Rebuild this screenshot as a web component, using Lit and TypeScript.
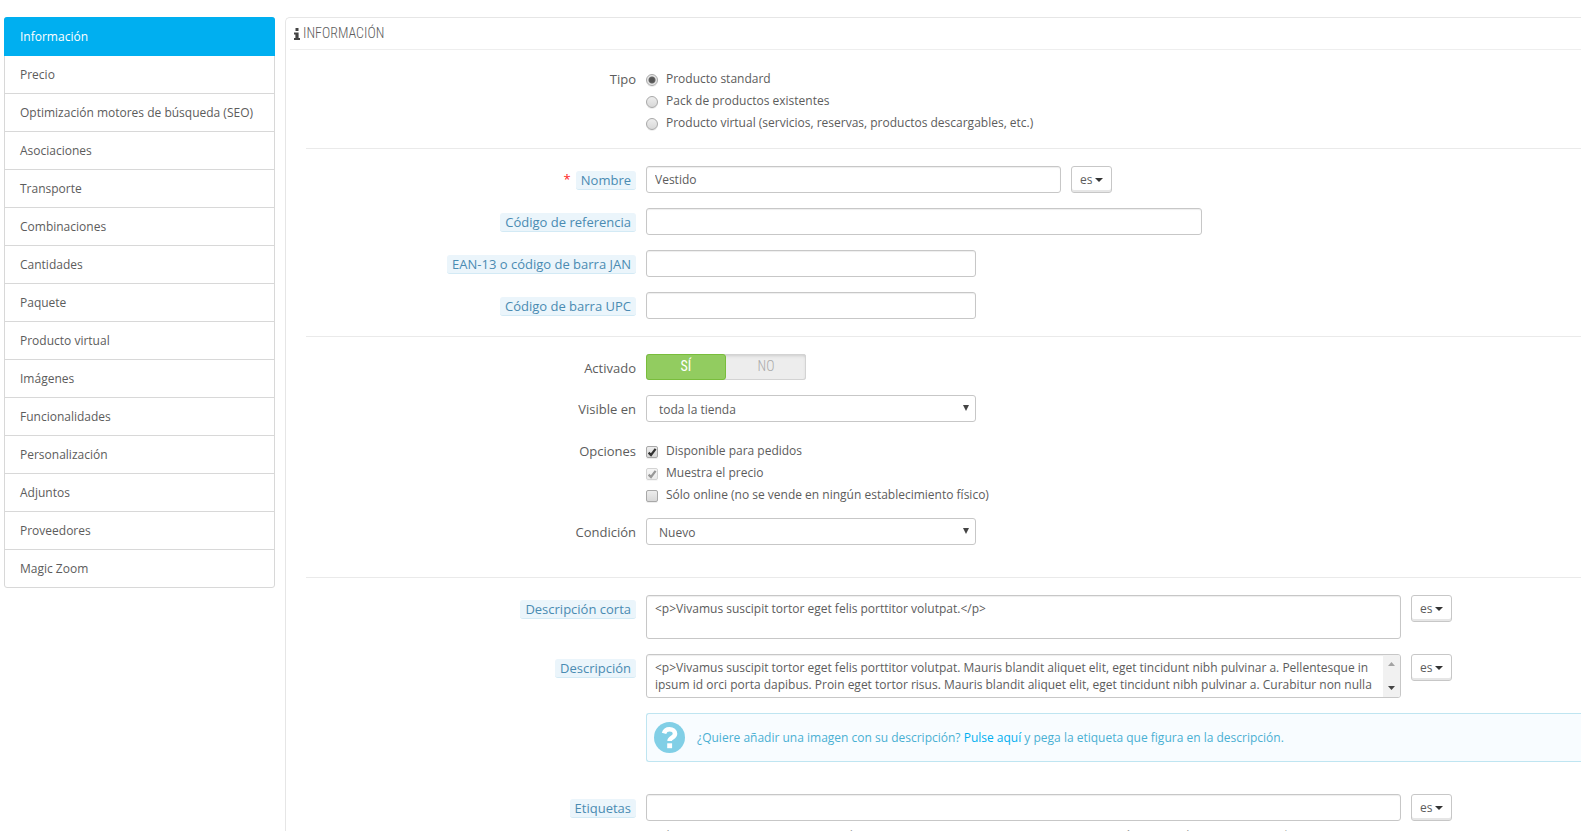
import { LitElement, html, css, nothing, type TemplateResult } from "lit";
import { customElement, state } from "lit/decorators.js";

const TABS = [
  "Información",
  "Precio",
  "Optimización motores de búsqueda (SEO)",
  "Asociaciones",
  "Transporte",
  "Combinaciones",
  "Cantidades",
  "Paquete",
  "Producto virtual",
  "Imágenes",
  "Funcionalidades",
  "Personalización",
  "Adjuntos",
  "Proveedores",
  "Magic Zoom",
];

const LONG_TEXT =
  "<p>Vivamus suscipit tortor eget felis porttitor volutpat. Mauris blandit aliquet elit, eget tincidunt nibh pulvinar a. Pellentesque in ipsum id orci porta dapibus. Proin eget tortor risus. Mauris blandit aliquet elit, eget tincidunt nibh pulvinar a. Curabitur non nulla sit amet nisl tempus convallis quis ac lectus.</p>";

@customElement("lang-button")
class LangButton extends LitElement {
  static styles = css`
    :host {
      display: block;
    }
    .btn {
      display: flex;
      align-items: center;
      gap: 3px;
      height: 27px;
      box-sizing: border-box;
      padding: 0 8px;
      border: 1px solid #c7c7c7;
      border-radius: 3px;
      background: #fff;
      box-shadow: inset 0 -2px 0 #e6e6e6;
      font: 12px/17px "Open Sans", sans-serif;
      color: #5c5c5c;
      cursor: pointer;
    }
    .caret {
      width: 8px;
      height: 4px;
      fill: #333;
    }
  `;
  render() {
    return html`<button class="btn" type="button" aria-haspopup="true">
      es<svg class="caret" viewBox="0 0 8 4" aria-hidden="true"><path d="M0 0h8L4 4z" /></svg>
    </button>`;
  }
}

@customElement("app-root")
class AppRoot extends LitElement {
  @state() private tab = 0;

  static styles = css`
    :host {
      display: block;
      overflow: hidden;
      background: #fff;
      font: 12px/17px "Open Sans", sans-serif;
      color: #5c5c5c;
    }
    .page {
      display: flex;
      align-items: stretch;
      gap: 10px;
      padding: 17px 0 0 4px;
      height: 100vh;
      box-sizing: border-box;
    }
    .tabs {
      flex: 0 0 271px;
      align-self: flex-start;
      box-sizing: border-box;
      border: 1px solid #d8d8d8;
      border-radius: 3px;
    }
    .tab {
      display: block;
      padding: 10px 15px;
      border-top: 1px solid #d8d8d8;
      color: #5c5c5c;
      text-decoration: none;
    }
    .tab:first-child {
      border-top: 0;
    }
    .tab.active {
      margin: -1px -1px 0;
      padding: 11px 16px;
      border-top: 0;
      background: #00aff0;
      color: #fff;
    }
    .tab.active + .tab {
      border-top: 0;
    }
    .tab.active:first-child {
      border-radius: 3px 3px 0 0;
    }
    .panel {
      flex: 1;
      min-width: 0;
      min-height: 0;
      border: 1px solid #e6e6e6;
      border-width: 1px 0 0 1px;
      border-top-left-radius: 5px;
      overflow: hidden;
    }
    .title {
      display: flex;
      align-items: center;
      gap: 3px;
      height: 31px;
      box-sizing: content-box;
      margin: 0 0 0 4px;
      padding-left: 4px;
      border-bottom: 1px solid #eee;
      font: 300 14px/17px "Ubuntu Condensed", "Roboto Condensed", "Open Sans Condensed", "Liberation Sans Narrow", Roboto, sans-serif;
      text-transform: uppercase;
    }
    .info {
      width: 6px;
      height: 12px;
      fill: #444;
    }
    .form {
      padding: 15px 0 0 15px;
    }
    .rule {
      height: 1px;
      margin: 17px 0 17px 5px;
      border: 0;
      background: #eaeaea;
    }
    .row {
      display: grid;
      grid-template-columns: minmax(0, 17fr) minmax(0, 47fr);
      margin-bottom: 15px;
    }
    .row.last {
      margin-bottom: 17px;
    }
    .row.spaced {
      margin-bottom: 32px;
    }
    .name {
      display: flex;
      justify-content: flex-end;
      align-items: flex-start;
      gap: 5px;
      padding: 5px 5px 0 0;
      font-size: 13px;
      line-height: 18px;
    }
    .star {
      color: #f22;
      line-height: 17px;
    }
    .hint {
      padding: 0 5px;
      border-bottom: 1px solid #d3eaf5;
      border-radius: 3px;
      background: #ebf5fb;
      color: #4a8bb2;
    }
    .field {
      display: flex;
      align-items: flex-start;
      gap: 10px;
      padding-left: 5px;
    }
    .text,
    .area,
    .select {
      box-sizing: border-box;
      min-width: 0;
      margin: 0;
      border: 1px solid #c7c7c7;
      border-radius: 3px;
      background: #fff;
      box-shadow: inset 0 1px 1px #eee;
      font: 12px/17px "Open Sans", sans-serif;
      color: #5c5c5c;
    }
    .text {
      height: 27px;
      padding: 0 8px;
    }
    .area {
      display: block;
      height: 44px;
      padding: 4px 8px;
      resize: none;
    }
    .area-box {
      display: flex;
      height: 44px;
      min-width: 0;
      box-sizing: border-box;
      border: 1px solid #c7c7c7;
      border-radius: 3px;
      box-shadow: inset 0 1px 1px #eee;
      overflow: hidden;
    }
    .area-box .area {
      flex: 1;
      height: 38px;
      padding-bottom: 0;
      border: 0;
      background: transparent;
      box-shadow: none;
      overflow: hidden;
    }
    .scroll {
      display: flex;
      flex-direction: column;
      justify-content: space-between;
      align-items: center;
      width: 17px;
      box-sizing: border-box;
      padding: 7px 0;
      background: #f1f1f1;
    }
    .scroll svg {
      width: 7px;
      height: 4px;
    }
    .up {
      fill: #a3a3a3;
    }
    .down {
      fill: #444;
    }
    .w-name {
      width: 415px;
    }
    .w-ref {
      width: 556px;
    }
    .w-code {
      width: 330px;
    }
    .w-wide {
      width: 755px;
    }
    .select-box {
      display: grid;
      align-items: center;
    }
    .select-box > * {
      grid-area: 1 / 1;
    }
    .select {
      width: 100%;
      height: 27px;
      padding: 2px 12px 0;
      appearance: none;
      box-shadow: none;
    }
    .arrow {
      justify-self: end;
      width: 6px;
      height: 6px;
      margin: 0 7px 2px 0;
      fill: #444;
      pointer-events: none;
    }
    .choices {
      display: flex;
      flex-direction: column;
      gap: 5px;
      padding: 5px 0 0 5px;
    }
    .choice {
      display: flex;
      align-items: center;
      gap: 8px;
    }
    .mark {
      appearance: none;
      box-sizing: border-box;
      width: 12px;
      height: 12px;
      margin: 2px 0 0;
      border: 1px solid #a8a8a8;
      background: linear-gradient(#ededed, #d8d8d8);
      box-shadow: 0 1px 0 #eee;
    }
    .mark[type="radio"] {
      border-radius: 50%;
    }
    .mark[type="radio"]:checked {
      background: radial-gradient(circle, #555 0 2px, #666 3px, #e6e6e6 4px);
    }
    .mark[type="checkbox"] {
      border-radius: 2px;
    }
    .mark[type="checkbox"]:checked {
      background: url("data:image/svg+xml,%3Csvg xmlns='http://www.w3.org/2000/svg' viewBox='0 0 10 10'%3E%3Cpath d='M1.6 5.6L4 8l4.600-6.200' fill='none' stroke='%23333' stroke-width='2.200'/%3E%3C/svg%3E") center / 10px,
        linear-gradient(#ededed, #d8d8d8);
    }
    .mark:disabled {
      opacity: 0.5;
    }
    .switch {
      display: grid;
      grid-template-columns: 1fr 1fr;
      width: 160px;
      height: 26px;
      box-sizing: border-box;
      border-radius: 3px;
      background: #ededed;
      box-shadow: inset 0 0 0 1px #d3d3d3, inset 0 2px 3px #ccc;
      font: 300 14px/17px "Ubuntu Condensed", "Roboto Condensed", "Open Sans Condensed", "Liberation Sans Narrow", Roboto, sans-serif;
    }
    .switch label {
      display: flex;
      align-items: center;
      justify-content: center;
      padding-bottom: 1px;
      border: 1px solid transparent;
      border-radius: 3px;
      color: #aaa;
    }
    .switch label:has(:checked) {
      border-color: #79bd3c;
      background: #92cc60;
      color: #fff;
      font-weight: 400;
    }
    .switch input {
      appearance: none;
      width: 0;
      height: 0;
      margin: 0;
    }
    .alert {
      flex: 1;
      display: flex;
      align-items: center;
      gap: 12px;
      height: 49px;
      box-sizing: border-box;
      padding-left: 7px;
      border: 1px solid #bfe5f1;
      border-right: 0;
      border-radius: 3px 0 0 3px;
      background: #f8fcff;
      color: #4ab0d3;
    }
    .alert p {
      margin: 0;
    }
    .alert a {
      color: #00aff0;
      text-decoration: none;
    }
    .question {
      width: 31px;
      height: 31px;
    }
    .stack {
      display: flex;
      flex-direction: column;
      gap: 6px;
    }
    .help {
      margin: 0;
      padding-left: 7px;
      color: #959595;
      white-space: nowrap;
    }
  `;

  private row(label: string, id: string, body: TemplateResult, o: { hint?: boolean; star?: boolean; cls?: string } = {}) {
    return html`<div class="row ${o.cls ?? ""}">
      <div class="name">
        ${o.star ? html`<span class="star">*</span>` : nothing}
        ${id
          ? html`<label class=${o.hint ? "hint" : ""} for=${id}>${label}</label>`
          : html`<span class=${o.hint ? "hint" : ""}>${label}</span>`}
      </div>
      ${body}
    </div>`;
  }

  private select(id: string, value: string) {
    return html`<div class="field">
      <div class="select-box w-code">
        <select class="select" id=${id}><option>${value}</option></select>
        <svg class="arrow" viewBox="0 0 7 7" aria-hidden="true"><path d="M0 0h7L3.500 7z" /></svg>
      </div>
    </div>`;
  }

  render() {
    return html`<div class="page">
      <nav class="tabs">
        ${TABS.map(
          (t, i) => html`<a class="tab ${i === this.tab ? "active" : ""}" href="#" @click=${(e: Event) => {
            e.preventDefault();
            this.tab = i;
          }}>${t}</a>`
        )}
      </nav>
      <main class="panel">
        <h3 class="title">
          <svg class="info" viewBox="0 0 6 12" aria-hidden="true"><path d="M1.500 0h3v3h-3zM0 4.500h4.600V10H6v2H0v-2h1.400V6.500H0z" /></svg>Información
        </h3>
        <form class="form">
          ${this.row("Tipo", "", html`<div class="choices">
            <label class="choice"><input class="mark" type="radio" name="tipo" checked />Producto standard</label>
            <label class="choice"><input class="mark" type="radio" name="tipo" />Pack de productos existentes</label>
            <label class="choice"><input class="mark" type="radio" name="tipo" />Producto virtual (servicios, reservas, productos descargables, etc.)</label>
          </div>`, { cls: "last" })}
          <hr class="rule" />
          ${this.row("Nombre", "nombre", html`<div class="field"><input class="text w-name" id="nombre" type="text" value="Vestido" /><lang-button></lang-button></div>`, { hint: true, star: true })}
          ${this.row("Código de referencia", "ref", html`<div class="field"><input class="text w-ref" id="ref" type="text" /></div>`, { hint: true })}
          ${this.row("EAN-13 o código de barra JAN", "ean", html`<div class="field"><input class="text w-code" id="ean" type="text" /></div>`, { hint: true })}
          ${this.row("Código de barra UPC", "upc", html`<div class="field"><input class="text w-code" id="upc" type="text" /></div>`, { hint: true, cls: "last" })}
          <hr class="rule" />
          ${this.row("Activado", "", html`<div class="field"><div class="switch">
            <label><input type="radio" name="activo" checked />SÍ</label>
            <label><input type="radio" name="activo" />NO</label>
          </div></div>`)}
          ${this.row("Visible en", "visible", this.select("visible", "toda la tienda"))}
          ${this.row("Opciones", "", html`<div class="choices">
            <label class="choice"><input class="mark" type="checkbox" checked />Disponible para pedidos</label>
            <label class="choice"><input class="mark" type="checkbox" checked disabled />Muestra el precio</label>
            <label class="choice"><input class="mark" type="checkbox" />Sólo online (no se vende en ningún establecimiento físico)</label>
          </div>`)}
          ${this.row("Condición", "cond", this.select("cond", "Nuevo"), { cls: "spaced" })}
          <hr class="rule" />
          ${this.row("Descripción corta", "corta", html`<div class="field">
            <textarea class="area w-wide" id="corta" .value=${"<p>Vivamus suscipit tortor eget felis porttitor volutpat.</p>"}></textarea><lang-button></lang-button>
          </div>`, { hint: true })}
          ${this.row("Descripción", "desc", html`<div class="field">
            <div class="area-box w-wide">
              <textarea class="area" id="desc" .value=${LONG_TEXT}></textarea>
              <div class="scroll" aria-hidden="true">
                <svg class="up" viewBox="0 0 7 4"><path d="M0 4h7L3.500 0z" /></svg>
                <svg class="down" viewBox="0 0 7 4"><path d="M0 0h7L3.500 4z" /></svg>
              </div>
            </div><lang-button></lang-button>
          </div>`, { hint: true })}
          <div class="row spaced">
            <div></div>
            <div class="field"><div class="alert">
              <svg class="question" viewBox="0 0 31 31" aria-hidden="true">
                <circle cx="15.500" cy="15.500" r="15.500" fill="#81cfe6" />
                <path d="M10 11.400c.8-2.800 2.700-4.100 5.500-4.100 3.200 0 5.500 1.700 5.500 4.400 0 4-5.400 3.800-5.400 7.300" fill="none" stroke="#fff" stroke-width="4.600" />
                <path d="M13.200 21.300h4.900v4.900h-4.900z" fill="#fff" />
              </svg>
              <p>¿Quiere añadir una imagen con su descripción? <a href="#">Pulse aquí</a> y pega la etiqueta que figura en la descripción.</p>
            </div></div>
          </div>
          ${this.row("Etiquetas", "tags", html`<div class="stack">
            <div class="field"><input class="text w-wide" id="tags" type="text" /><lang-button></lang-button></div>
            <p class="help">Cada etiqueta tiene que estar seguida por una coma. Los siguientes caracteres no están permitidos: !&lt;;&gt;;?=+#"°{}_$%</p>
          </div>`, { hint: true })}
        </form>
      </main>
    </div>`;
  }
}
